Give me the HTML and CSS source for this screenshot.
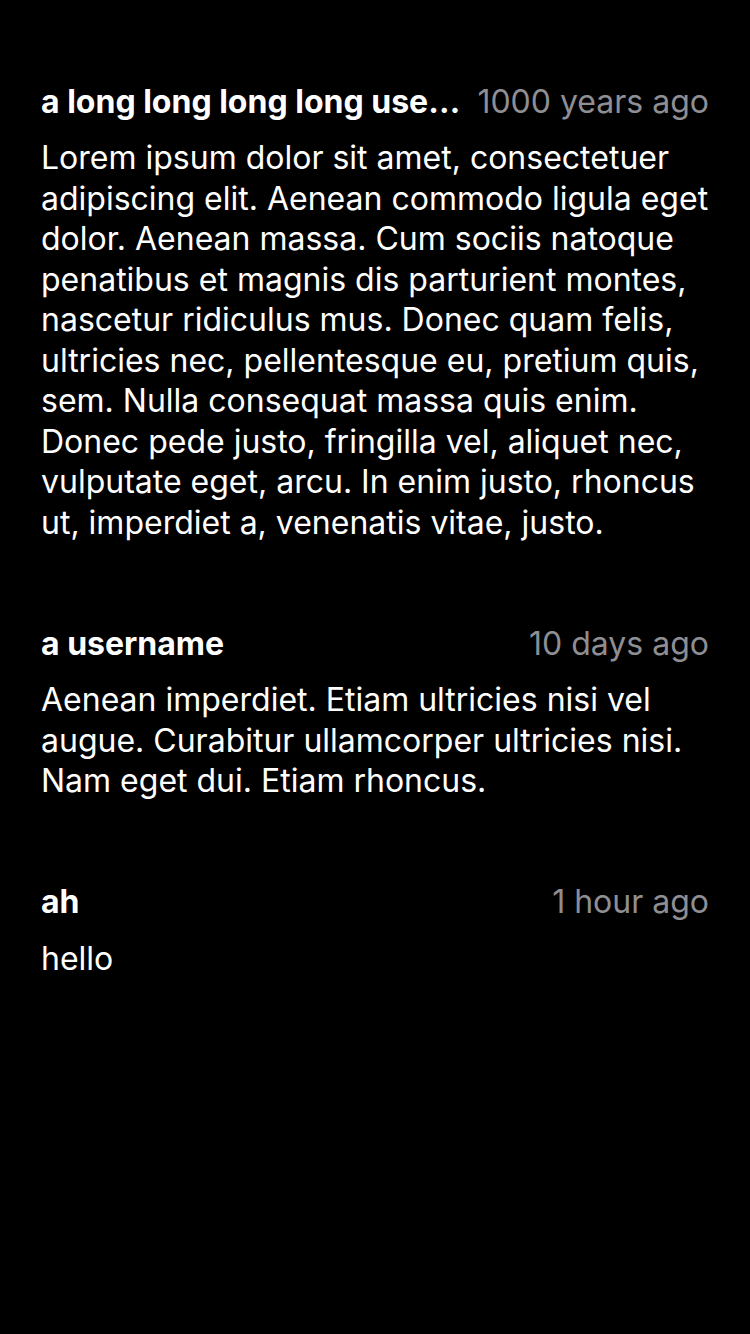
FILE: index.html
```html
<!DOCTYPE html>
<html>
<head>
<meta charset="utf-8">
<link rel="stylesheet" href="styles.css">
</head>
<body>
<main class="comments">
  <article class="comment">
    <header class="comment-head">
      <span class="user">a long long long long username that keeps going</span>
      <span class="time">1000 years ago</span>
    </header>
    <p class="text">Lorem ipsum dolor sit amet, consectetuer adipiscing elit. Aenean commodo ligula eget dolor. Aenean massa. Cum sociis natoque penatibus et magnis dis parturient montes, nascetur ridiculus mus. Donec quam felis, ultricies nec, pellentesque eu, pretium quis, sem. Nulla consequat massa quis enim. Donec pede justo, fringilla vel, aliquet nec, vulputate eget, arcu. In enim justo, rhoncus ut, imperdiet a, venenatis vitae, justo.</p>
  </article>
  <article class="comment">
    <header class="comment-head">
      <span class="user">a username</span>
      <span class="time">10 days ago</span>
    </header>
    <p class="text">Aenean imperdiet. Etiam ultricies nisi vel augue. Curabitur ullamcorper ultricies nisi. Nam eget dui. Etiam rhoncus.</p>
  </article>
  <article class="comment">
    <header class="comment-head">
      <span class="user">ah</span>
      <span class="time">1 hour ago</span>
    </header>
    <p class="text">hello</p>
  </article>
</main>
</body>
</html>
```
FILE: styles.css
```css
html, body {
  margin: 0;
  padding: 0;
  background: #000;
}
body {
  font-family: Inter, "Noto Sans", sans-serif;
  color: #fff;
  -webkit-font-smoothing: antialiased;
}
.comments {
  display: flex;
  flex-direction: column;
  gap: 80px;
  padding: 81px 38px 0 41px;
}
.comment {
  display: flex;
  flex-direction: column;
  gap: 17px;
}
.comment-head {
  display: flex;
  align-items: center;
  gap: 8px;
  height: 40px;
  padding-right: 3px;
}
.user {
  flex: 1 1 auto;
  min-width: 0;
  font-weight: 700;
  font-size: 32px;
  white-space: nowrap;
  overflow: hidden;
  text-overflow: ellipsis;
}
.time {
  flex: 0 0 auto;
  margin-left: auto;
  font-size: 32px;
  color: #8e8e93;
}
.text {
  margin: 0;
  font-size: 32px;
  line-height: 40.5px;
}
```
